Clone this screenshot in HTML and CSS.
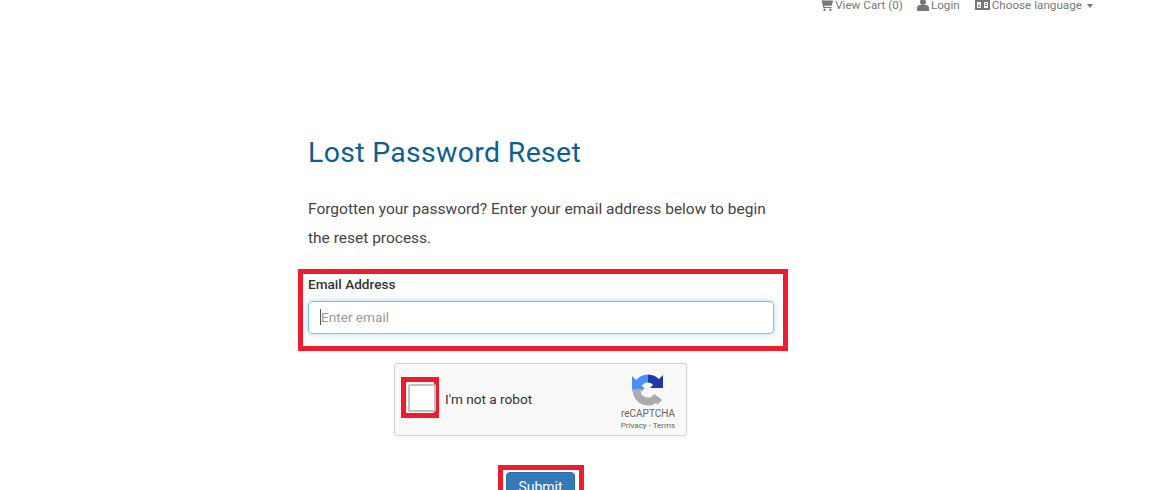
FILE: index.html
```html
<!DOCTYPE html>
<html lang="en">
<head>
<meta charset="utf-8">
<title>Lost Password Reset</title>
<link rel="stylesheet" href="styles.css">
</head>
<body>
<nav class="topnav">
  <a class="navlink navlink-cart"><svg class="ico" width="13" height="12" viewBox="0 0 13 12"><path fill="#777" d="M0 0h2.400l.4 1.400H13l-1.300 5.400H4.200l.3 1.200h7.200v1.100H3.400L1.600 1.100H0z"/><circle cx="4.600" cy="10.700" r="1.200" fill="#777"/><circle cx="10.400" cy="10.700" r="1.200" fill="#777"/></svg>View Cart (0)</a>
  <a class="navlink"><svg class="ico" width="12" height="12" viewBox="0 0 12 12"><circle cx="6" cy="3" r="3" fill="#777"/><path fill="#777" d="M0 12V8.800C0 7.200 1.500 6 3 6h6c1.500 0 3 1.200 3 2.800V12z"/></svg>Login</a>
  <a class="navlink"><svg class="ico" width="15" height="10" viewBox="0 0 15 10"><path fill="#777" d="M0 0h15v10H0z"/><path fill="#fff" d="M2 2h4v6H2zM9 2h4v6H9z"/><path fill="#777" d="M3 7l1-4 1 4zM10 3h2v1h-2zM10 5h2v1h-2z"/></svg>Choose language<span class="caret"></span></a>
</nav>
<main class="panel">
  <h1 class="title">Lost Password Reset</h1>
  <p class="intro">Forgotten your password? Enter your email address below to begin the reset process.</p>
  <div class="field">
    <label class="label" for="email">Email Address</label>
    <div class="input" id="email"><span class="cursor"></span><span class="placeholder">Enter email</span></div>
  </div>
  <div class="captcha">
    <div class="checkmark"><span class="box"></span></div>
    <span class="robot">I'm not a robot</span>
    <div class="brand">
      <svg width="32" height="32" viewBox="0 0 32 32">
        <path fill="none" stroke="#ababab" stroke-width="8" d="M4.500 16a11.500 11.500 0 0 0 21 6.500"/>
        <path fill="#ababab" d="M0 15h11v2H0zM21 20l9 6-5 5z"/>
        <path fill="none" stroke="#4a90f5" stroke-width="8" d="M16 4.500A11.500 11.500 0 0 0 6.500 9.500"/>
        <path fill="#4a90f5" d="M0 2l13 13H0z"/>
        <path fill="none" stroke="#1c3aa9" stroke-width="8" d="M16 4.500a11.500 11.500 0 0 1 9 4.500"/>
        <path fill="#1c3aa9" d="M31 1v13H18z"/>
      </svg>
      <span class="brand-name">reCAPTCHA</span>
      <span class="brand-links">Privacy - Terms</span>
    </div>
  </div>
  <div class="actions"><button class="submit" type="button">Submit</button></div>
</main>
</body>
</html>
```
FILE: styles.css
```css
html, body {
  margin: 0;
  height: 490px;
  overflow: hidden;
  background: #fff;
  font-family: Roboto, "Liberation Sans", sans-serif;
}
.topnav {
  display: flex;
  justify-content: flex-end;
  gap: 15px;
  height: 10px;
  padding-right: 67px;
  font-size: 11.700px;
  line-height: 10px;
  color: #777;
}
.navlink {
  display: flex;
  align-items: center;
  gap: 2px;
  white-space: nowrap;
}
.navlink-cart { margin-right: -1px; }
.ico { flex: none; }
.caret {
  width: 0;
  height: 0;
  margin: 2px 0 0 3px;
  border-left: 3.500px solid transparent;
  border-right: 3.500px solid transparent;
  border-top: 4px solid #777;
}
.panel {
  width: 466px;
  margin-left: 308px;
  padding-top: 125px;
}
.title {
  margin: 0;
  font-size: 28.400px;
  line-height: 36px;
  font-weight: 400;
  letter-spacing: 0.350px;
  color: #0d5f92;
}
.intro {
  margin: 24px 0 0;
  width: 466px;
  font-size: 15.500px;
  line-height: 29px;
  color: #444;
}
.field {
  box-sizing: border-box;
  width: 490px;
  height: 82px;
  margin: 16px 0 0 -10px;
  padding: 0 9px 0 5px;
  border: 5px solid #ed1c2e;
}
.label {
  display: block;
  padding-top: 1px;
  font-size: 13.600px;
  line-height: 18px;
  font-weight: 500;
  color: #333;
}
.input {
  display: flex;
  align-items: center;
  box-sizing: border-box;
  height: 33px;
  margin-top: 8px;
  padding: 0 0 2px 11px;
  border: 1px solid #80bdee;
  border-radius: 4px;
  box-shadow: 0 0 6px rgba(102, 175, 233, 0.5);
}
.cursor {
  width: 1px;
  height: 16px;
  background: #555;
}
.placeholder {
  font-size: 13.600px;
  color: #999;
}
.captcha {
  display: flex;
  align-items: center;
  box-sizing: border-box;
  width: 293px;
  height: 73px;
  margin: 12px 0 0 86px;
  border: 1px solid #d3d3d3;
  border-radius: 3px;
  background: #f9f9f9;
  box-shadow: 0 0 3px rgba(0, 0, 0, 0.08);
}
.checkmark {
  box-sizing: border-box;
  width: 38px;
  height: 41px;
  margin: -5px 0 0 6px;
  padding: 5px;
  border: 5px solid #ed1c2e;
}
.box {
  display: block;
  box-sizing: border-box;
  width: 28px;
  height: 28px;
  margin: -3px 0 0 -3px;
  border: 2px solid #c1c1c1;
  border-radius: 2px;
  background: #fff;
}
.robot {
  margin: 0 0 2px 6px;
  font-size: 13.600px;
  color: #333;
}
.brand {
  display: flex;
  flex-direction: column;
  align-items: center;
  margin-left: auto;
  width: 56px;
  margin-right: 10px;
  padding-top: 6px;
  color: #666;
}
.brand-name {
  margin-top: 2px;
  font-size: 10px;
  line-height: 12px;
}
.brand-links {
  font-size: 8px;
  line-height: 12px;
  white-space: nowrap;
}
.actions {
  box-sizing: border-box;
  width: 86px;
  height: 60px;
  margin: 29px 0 0 190px;
  padding: 2px 3px;
  border: 5px solid #ed1c2e;
}
.submit {
  width: 69px;
  height: 30px;
  padding: 0;
  border: 1px solid #2e6da4;
  border-radius: 4px;
  background: #337ab7;
  color: #fff;
  font: 14px Roboto, sans-serif;
}
```
